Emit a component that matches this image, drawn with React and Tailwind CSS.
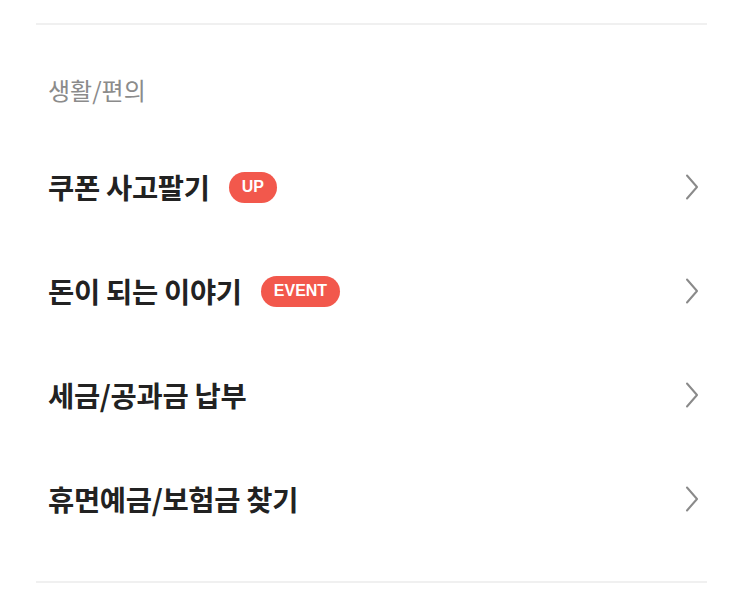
const items = [
  { label: "쿠폰 사고팔기", badge: "UP" },
  { label: "돈이 되는 이야기", badge: "EVENT" },
  { label: "세금/공과금 납부" },
  { label: "휴면예금/보험금 찾기" },
];

function Chevron() {
  return (
    <svg width="14" height="26" viewBox="0 0 14 26" fill="none">
      <path d="M2 1.5 L12 13 L2 24.5" stroke="#8a8a8a" strokeWidth="2" strokeLinecap="round" strokeLinejoin="round" />
    </svg>
  );
}

export default function App() {
  return (
    <div
      className="min-h-[609px] bg-white px-[36px] pt-[23px]"
      style={{ fontFamily: '"Noto Sans CJK KR", "Noto Sans", sans-serif' }}
    >
      <div className="h-[2px] bg-[#f0f0f0]" />
      <h2 className="mt-[50px] px-[12px] text-[24px] leading-[30px] font-normal text-[#8b8b8b]">
        생활/편의
      </h2>
      <ul className="mt-[30px]">
        {items.map((item) => (
          <li key={item.label} className="flex h-[104px] items-center justify-between pl-[12px] pr-[8px]">
            <div className="flex items-center gap-[19px]">
              <span className="text-[28.5px] font-bold leading-none tracking-[-0.3px] text-[#222222]">
                {item.label}
              </span>
              {item.badge && (
                <span
                  className="flex h-[31px] items-center rounded-full bg-[#f2584c] px-[13px] text-[16px] font-bold leading-none text-white"
                  style={{ fontFamily: '"Liberation Sans", Arial, sans-serif' }}
                >
                  {item.badge}
                </span>
              )}
            </div>
            <Chevron />
          </li>
        ))}
      </ul>
      <div className="mt-[30px] h-[2px] bg-[#f0f0f0]" />
    </div>
  );
}
